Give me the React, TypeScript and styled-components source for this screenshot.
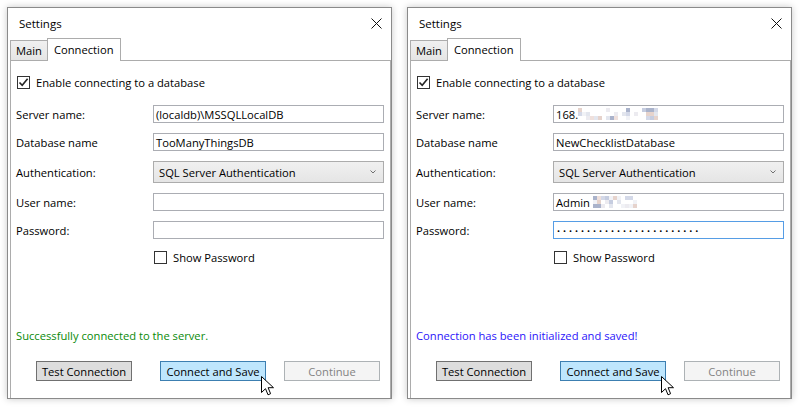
import React from "react";
import styled, { createGlobalStyle, css } from "styled-components";

const GlobalStyle = createGlobalStyle`
  html, body {
    margin: 0;
    padding: 0;
    background: #ffffff;
  }
  body {
    font-family: "Open Sans", "Noto Sans", sans-serif;
    font-size: 11.2px;
    color: #000;
  }
`;

const Page = styled.div`
  display: flex;
  gap: 15px;
  padding: 7px;
  width: 800px;
  height: 407px;
  box-sizing: border-box;
`;

const Window = styled.div`
  position: relative;
  width: 385px;
  height: 392px;
  box-sizing: border-box;
  border: 1px solid #8a8a8a;
  background: #fff;
  box-shadow: 0 0 7px rgba(0, 0, 0, 0.22);
  display: flex;
  flex-direction: column;
`;

const TitleBar = styled.div`
  height: 30px;
  flex: none;
  display: flex;
  align-items: center;
  justify-content: space-between;
  padding: 0 9px 0 11px;
  font-size: 11.5px;
`;

const CloseIcon = styled.svg`
  width: 11px;
  height: 11px;
  display: block;
`;

const TabStrip = styled.div`
  height: 22px;
  flex: none;
  display: flex;
  align-items: flex-end;
  padding-left: 2px;
  position: relative;
  z-index: 1;
`;

const Tab = styled.div<{ $active?: boolean }>`
  box-sizing: border-box;
  display: flex;
  align-items: center;
  border: 1px solid #acacac;
  border-bottom: none;
  ${({ $active }) =>
    $active
      ? css`
          height: 23px;
          margin-bottom: -1px;
          margin-left: -1px;
          padding: 0 6px 2px 6px;
          background: #fff;
        `
      : css`
          height: 20px;
          padding: 0 5px 0 5px;
          background: linear-gradient(#f0f0f0, #e5e5e5);
        `}
`;

const TabPanel = styled.div`
  flex: 1;
  margin-left: 2px;
  border: 1px solid #acacac;
  border-bottom: none;
  display: flex;
  flex-direction: column;
  padding: 12px 5px 17px 5px;
`;

const CheckRow = styled.label`
  display: flex;
  align-items: center;
  height: 18px;
  gap: 6px;
  margin-left: 1px;
`;

const CheckBox = styled.span`
  width: 13px;
  height: 13px;
  box-sizing: border-box;
  border: 1px solid #333;
  background: #fff;
  display: inline-flex;
  align-items: center;
  justify-content: center;
  flex: none;
`;

const Form = styled.div`
  display: grid;
  grid-template-columns: 137px 231px;
  grid-template-rows: 18px 18px 22px 18px 18px;
  row-gap: 10px;
  align-items: center;
  margin-top: 14px;
`;

const Label = styled.span`
  padding-left: 0;
`;

const Field = styled.div<{ $focused?: boolean }>`
  height: 18px;
  box-sizing: border-box;
  border: 1px solid ${({ $focused }) => ($focused ? "#569de5" : "#abadb3")};
  display: flex;
  align-items: center;
  padding-left: 2px;
  white-space: nowrap;
  overflow: hidden;
`;

const Combo = styled.div`
  height: 22px;
  box-sizing: border-box;
  border: 1px solid #acacac;
  background: linear-gradient(#f0f0f0, #e5e5e5);
  display: flex;
  align-items: center;
  justify-content: space-between;
  padding: 0 7px 0 5px;
`;

const Dots = styled.span`
  font-size: 8px;
  letter-spacing: 3px;
  padding-left: 1px;
`;

const ShowRow = styled(CheckRow)`
  margin-top: 10px;
  margin-left: 138px;
  height: 16px;
`;

const Spacer = styled.div`
  flex: 1;
`;

const Status = styled.div<{ $tone: "ok" | "saved" }>`
  height: 16px;
  line-height: 16px;
  color: ${({ $tone }) => ($tone === "ok" ? "#0a8a0a" : "#2a14fa")};
`;

const ButtonRow = styled.div`
  display: flex;
  margin-top: 17px;
`;

const Button = styled.div<{ $kind: "normal" | "hot" | "disabled"; $w: number; $offset: number }>`
  box-sizing: border-box;
  height: 20px;
  width: ${({ $w }) => $w}px;
  margin-left: ${({ $offset }) => $offset}px;
  display: flex;
  align-items: center;
  justify-content: center;
  border: 1px solid;
  ${({ $kind }) =>
    $kind === "normal"
      ? css`
          background: #dddddd;
          border-color: #707070;
        `
      : $kind === "hot"
      ? css`
          background: #bee6fd;
          border-color: #3c7fb1;
        `
      : css`
          background: #f4f4f4;
          border-color: #adb2b5;
          color: #838383;
        `}
`;

const Cursor = styled.svg`
  position: absolute;
  left: 253px;
  top: 368px;
  width: 14px;
  height: 21px;
`;

const Mosaic = styled.svg`
  display: block;
  flex: none;
`;

const Check = () => (
  <svg width="11" height="11" viewBox="0 0 11 11">
    <path d="M1.5 5.5 L4.2 8.3 L9.6 1.8" fill="none" stroke="#222" strokeWidth="1.6" />
  </svg>
);

const pixelBlocks = (cols: number, seed: number, palette: string[]) => {
  const out: { x: number; y: number; c: string }[] = [];
  let s = seed;
  for (let col = 0; col < cols; col++) {
    for (let row = 0; row < 3; row++) {
      s = (s * 9301 + 49297) % 233280;
      const r = s / 233280;
      if (r < 0.45) continue;
      out.push({ x: col * 4, y: row * 4, c: palette[Math.floor(r * 97) % palette.length] });
    }
  }
  return out;
};

const PixelText = ({ cols, seed }: { cols: number; seed: number }) => {
  const palette = ["#e3e6ee", "#d4d9e8", "#efe0dc", "#c6cde0", "#ecebf0", "#aab3cb", "#e6d3cc", "#f1f2f6"];
  const blocks = pixelBlocks(cols, seed, palette);
  return (
    <Mosaic width={cols * 4} height={12} viewBox={`0 0 ${cols * 4} 12`}>
      {blocks.map((b, i) => (
        <rect key={i} x={b.x} y={b.y} width="4" height="4" fill={b.c} />
      ))}
    </Mosaic>
  );
};

type DialogProps = {
  server: React.ReactNode;
  database: string;
  user: React.ReactNode;
  password: React.ReactNode;
  focusPassword?: boolean;
  status: string;
  tone: "ok" | "saved";
};

const Dialog = ({ server, database, user, password, focusPassword, status, tone }: DialogProps) => (
  <Window>
    <TitleBar>
      <span>Settings</span>
      <CloseIcon viewBox="0 0 11 11">
        <path d="M0.5 0.5 L10.5 10.5 M10.5 0.5 L0.5 10.5" stroke="#111" strokeWidth="1" />
      </CloseIcon>
    </TitleBar>
    <TabStrip>
      <Tab>Main</Tab>
      <Tab $active>Connection</Tab>
    </TabStrip>
    <TabPanel>
      <CheckRow>
        <CheckBox>
          <Check />
        </CheckBox>
        Enable connecting to a database
      </CheckRow>
      <Form>
        <Label>Server name:</Label>
        <Field>{server}</Field>
        <Label>Database name</Label>
        <Field>{database}</Field>
        <Label>Authentication:</Label>
        <Combo>
          <span>SQL Server Authentication</span>
          <svg width="6" height="4" viewBox="0 0 6 4">
            <path d="M0.5 0.5 L3 3 L5.5 0.5" fill="none" stroke="#707070" strokeWidth="1" />
          </svg>
        </Combo>
        <Label>User name:</Label>
        <Field>{user}</Field>
        <Label>Password:</Label>
        <Field $focused={focusPassword}>{password}</Field>
      </Form>
      <ShowRow>
        <CheckBox />
        Show Password
      </ShowRow>
      <Spacer />
      <Status $tone={tone}>{status}</Status>
      <ButtonRow>
        <Button $kind="normal" $w={96} $offset={20}>
          Test Connection
        </Button>
        <Button $kind="hot" $w={106} $offset={28}>
          Connect and Save
        </Button>
        <Button $kind="disabled" $w={96} $offset={18}>
          Continue
        </Button>
      </ButtonRow>
    </TabPanel>
    <Cursor viewBox="0 0 14 21">
      <path
        d="M0.5 0.5 L0.5 16.5 L4.5 12.7 L7 18.8 L9.6 17.7 L7.1 11.7 L12.5 11.7 Z"
        fill="#fff"
        stroke="#000"
        strokeWidth="1"
        strokeLinejoin="miter"
      />
    </Cursor>
  </Window>
);

export default function App() {
  return (
    <>
      <GlobalStyle />
      <Page>
        <Dialog
          server="(localdb)\MSSQLLocalDB"
          database="TooManyThingsDB"
          user=""
          password=""
          status="Successfully connected to the server."
          tone="ok"
        />
        <Dialog
          server={
            <>
              <span>168.</span>
              <PixelText cols={21} seed={17} />
            </>
          }
          database="NewChecklistDatabase"
          user={
            <>
              <span>Admin</span>
              <span style={{ width: 3 }} />
              <PixelText cols={11} seed={42} />
            </>
          }
          password={<Dots>{"•".repeat(24)}</Dots>}
          focusPassword
          status="Connection has been initialized and saved!"
          tone="saved"
        />
      </Page>
    </>
  );
}
